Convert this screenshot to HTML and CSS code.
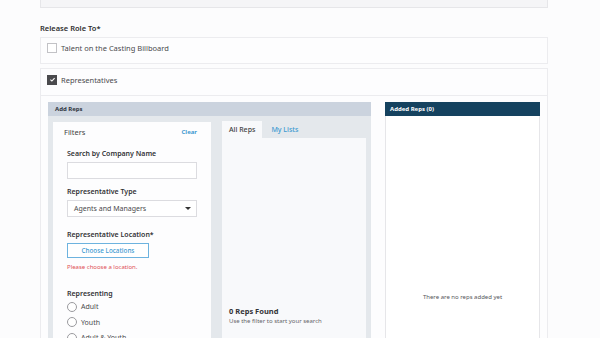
FILE: index.html
```html
<!DOCTYPE html>
<html lang="en">
<head>
  <meta charset="UTF-8">
  <meta name="viewport" content="width=device-width, initial-scale=1.0">
  <title>Release Role</title>
  <link rel="stylesheet" href="styles.css">
</head>
<body>
  <div id="page">
    <div class="top-box"></div>

    <div class="section-title">Release Role To*</div>

    <div class="card">
      <label class="check-row">
        <span class="checkbox"></span>
        <span>Talent on the Casting Billboard</span>
      </label>
    </div>

    <div class="card">
      <label class="check-row">
        <span class="checkbox checked">
          <svg viewBox="0 0 10 10" width="7" height="7"><path d="M2 5.2 L4.1 7.2 L8 3" fill="none" stroke="#fff" stroke-width="1.6"/></svg>
        </span>
        <span>Representatives</span>
      </label>

      <div class="reps-body">
        <div class="add-reps">
          <div class="panel-header">Add Reps</div>
          <div class="add-reps-content">
            <div class="filters">
              <div class="filters-head">
                <span>Filters</span>
                <span class="link">Clear</span>
              </div>
              <div class="filters-body">
                <div class="field-label">Search by Company Name</div>
                <div class="input"></div>

                <div class="field-label">Representative Type</div>
                <div class="input select">
                  <span>Agents and Managers</span>
                  <span class="caret"></span>
                </div>

                <div class="field-label">Representative Location*</div>
                <div class="btn-outline">Choose Locations</div>
                <div class="error">Please choose a location.</div>

                <div class="field-label spaced">Representing</div>
                <div class="radio-row"><span class="radio"></span>Adult</div>
                <div class="radio-row"><span class="radio"></span>Youth</div>
                <div class="radio-row"><span class="radio"></span>Adult &amp; Youth</div>
              </div>
            </div>

            <div class="results">
              <div class="tabs">
                <div class="tab active">All Reps</div>
                <div class="tab">My Lists</div>
              </div>
              <div class="tab-panel">
                <div class="found">0 Reps Found</div>
                <div class="hint">Use the filter to start your search</div>
              </div>
            </div>
          </div>
        </div>

        <div class="added-reps">
          <div class="panel-header dark">Added Reps (0)</div>
          <div class="added-body">There are no reps added yet</div>
        </div>
      </div>
    </div>
  </div>
</body>
</html>
```

FILE: styles.css
```css
body {
  margin: 0;
  background-color: #fcfcfd;
  color: #3a3a3c;
  font-family: "Noto Sans", Arial, sans-serif;
  font-size: 7px;
  overflow: hidden;
}

#page {
  width: 508px;
  margin-left: 40px;
}

.top-box {
  height: 7px;
  background-color: #f5f5f7;
  border: 1px solid #e6e6e9;
  border-top: none;
}

.section-title {
  margin-top: 15px;
  font-weight: 600;
  font-size: 7.5px;
  color: #2f2f31;
  line-height: 10px;
}

.card {
  margin-top: 4px;
  background-color: #fdfdfe;
  border: 1px solid #ececef;
}

.check-row {
  display: flex;
  align-items: center;
  height: 20px;
  padding: 0 0 5px 6px;
  font-size: 7.5px;
  color: #4a4a4d;
}

.card + .card .check-row {
  height: 21px;
}

.checkbox {
  display: flex;
  align-items: center;
  justify-content: center;
  box-sizing: border-box;
  width: 10px;
  height: 10px;
  margin-right: 4px;
  border: 1px solid #c2c2c6;
  background-color: #fff;
}

.checkbox.checked {
  background-color: #4a4a4d;
  border-color: #4a4a4d;
}

.reps-body {
  display: flex;
  gap: 14px;
  padding: 6px 7px 0 7px;
  border-top: 1px solid #ececef;
}

.add-reps {
  width: 323px;
  background-color: #e4e8ec;
}

.panel-header {
  height: 14px;
  line-height: 14px;
  padding-left: 7px;
  font-size: 6px;
  font-weight: 700;
  background-color: #cbd3de;
  color: #2f3540;
}

.panel-header.dark {
  background-color: #15425f;
  color: #fff;
  padding-left: 5px;
}

.add-reps-content {
  display: flex;
  gap: 11px;
  padding: 6px 5px 0 5px;
  height: 240px;
}

.filters {
  width: 158px;
  background-color: #fdfdfe;
}

.filters-head {
  display: flex;
  justify-content: space-between;
  padding: 5px 14px 0 11px;
  font-size: 7.5px;
  line-height: 10px;
  color: #3f3f42;
}

.link {
  font-size: 6px;
  font-weight: 700;
  color: #3d9ad1;
}

.filters-body {
  padding: 12px 14px 0 14px;
}

.field-label {
  font-size: 7px;
  font-weight: 600;
  color: #333336;
  line-height: 10px;
  margin-bottom: 3px;
}

.field-label.spaced {
  margin-top: 18px;
  margin-bottom: 0;
}

.input {
  box-sizing: border-box;
  height: 17px;
  border: 1px solid #dcdce0;
  background-color: #fff;
  margin-bottom: 8px;
}

.select {
  display: flex;
  align-items: center;
  justify-content: space-between;
  padding: 0 5px 0 6px;
  font-size: 7px;
  color: #4a4a4d;
  margin-bottom: 13px;
}

.caret {
  width: 0;
  height: 0;
  border-left: 3px solid transparent;
  border-right: 3px solid transparent;
  border-top: 3px solid #333;
}

.btn-outline {
  box-sizing: border-box;
  width: 82px;
  height: 15px;
  line-height: 13px;
  margin-top: 1px;
  border: 1px solid #6db3df;
  text-align: center;
  font-size: 6.3px;
  color: #3d9ad1;
  font-weight: 500;
  background-color: #fff;
}

.error {
  margin-top: 5px;
  font-size: 6px;
  color: #e04e56;
  line-height: 8px;
}

.radio-row {
  display: flex;
  align-items: center;
  height: 15.5px;
  font-size: 7px;
  color: #4a4a4d;
}

.radio {
  box-sizing: border-box;
  width: 10px;
  height: 10px;
  border: 1px solid #9a9a9e;
  border-radius: 50%;
  margin-right: 4px;
  background-color: #fff;
}

.results {
  display: flex;
  flex-direction: column;
  width: 144px;
  margin-top: -1px;
}

.tabs {
  display: flex;
  height: 17px;
}

.tab {
  padding: 0 7px;
  line-height: 17px;
  font-size: 7px;
  color: #3d9ad1;
  font-weight: 500;
}

.tab.active {
  background-color: #f8f9fb;
  color: #3f3f42;
}

.tab + .tab {
  margin-left: 2px;
}

.tab-panel {
  flex: 1;
  background-color: #f8f9fb;
  padding: 168px 7px 0 7px;
}

.found {
  font-size: 7.5px;
  font-weight: 700;
  color: #333336;
  line-height: 10px;
}

.hint {
  font-size: 6px;
  color: #66666a;
  line-height: 9px;
  margin-top: 1px;
}

.added-reps {
  width: 155px;
  display: flex;
  flex-direction: column;
}

.added-body {
  height: 240px;
  box-sizing: border-box;
  border: 1px solid #e6e6e9;
  border-top: none;
  background-color: #fff;
  display: flex;
  align-items: center;
  justify-content: center;
  padding-top: 122px;
  font-size: 6px;
  color: #56565a;
}
```
